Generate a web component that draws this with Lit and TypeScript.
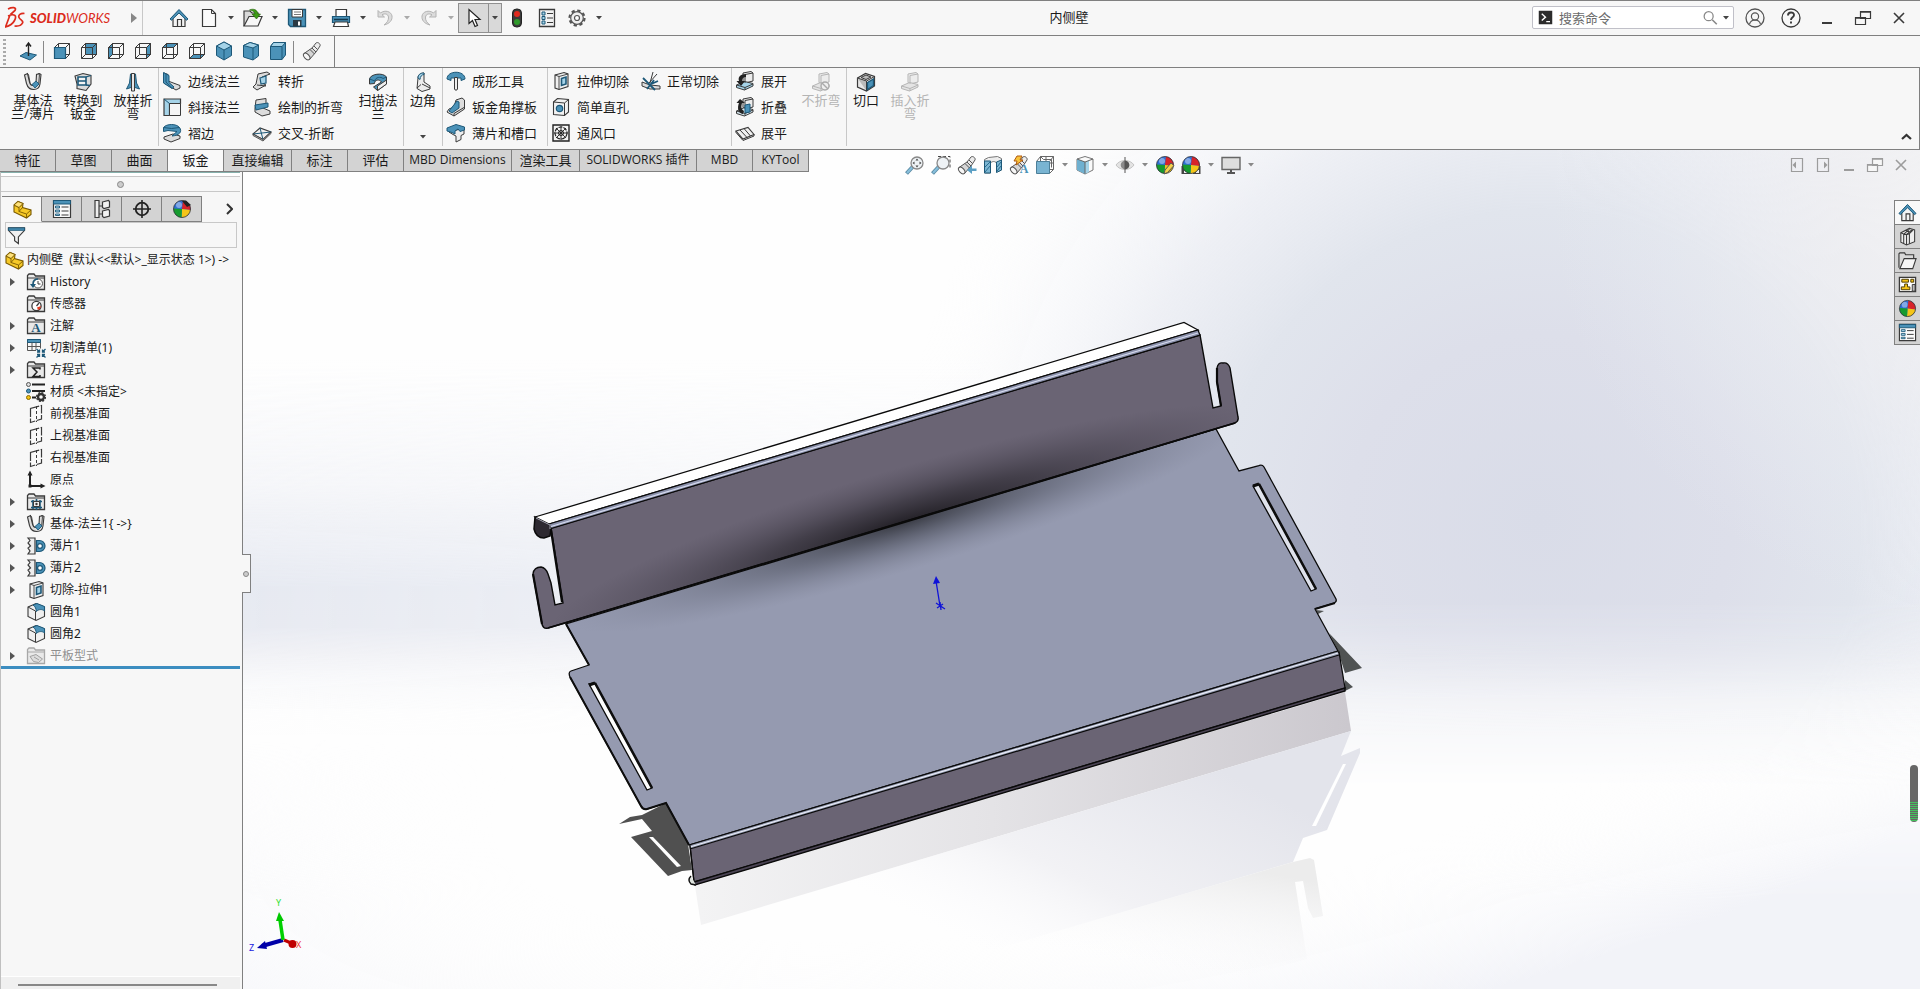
import { LitElement, html, svg, css, nothing, SVGTemplateResult, TemplateResult } from "lit";
import { customElement, state } from "lit/decorators.js";
import { classMap } from "lit/directives/class-map.js";

const INK = "#3a3a3a";
const BLUE = "#4b92b8";
const PALE = "#a5d3e8";
const DEEP = "#1d5878";
const STEEL = "#dcdcdc";
const RED = "#dc2b1c";

const wireCube = (face: SVGTemplateResult) => svg`
  <g fill="none" stroke=${INK} stroke-width="1">${face}
    <path d="M2.500 6.500h11v11h-11zM6.500 2.500h11v11h-11zM2.500 6.500l4-4M13.500 6.500l4-4M13.500 17.500l4-4M2.500 17.500l4-4"/>
  </g>`;
const folder = (inner: SVGTemplateResult | typeof nothing, line = INK) => svg`
  <path d="M1.500 17.500v-14l1.500-1.500h5l1.500 2h9v13.500z" fill="#e9e9e9" stroke=${line} stroke-width="1.300"/>
  <path d="M1.500 6h17" stroke=${line} stroke-width="1"/>${inner}`;
const plane = svg`<path d="M4.500 4.500l11-3v13.500l-11 3.500z" fill="#fafafa" stroke=${INK} stroke-width="1.200" stroke-dasharray="9 1.500"/>
  <path d="M10.500 2v16" stroke=${INK} stroke-dasharray="3 2"/>`;
const ball = svg`
  <circle cx="10" cy="10" r="8.500" fill="#2f6fd6"/>
  <path d="M10 10L11 1.500A8.500 8.500 0 0 1 18.500 11z" fill="#d8232a"/>
  <path d="M10 10l8.500 1A8.500 8.500 0 0 1 9.500 18.500z" fill="#f5c518"/>
  <path d="M10 10l-.5 8.500A8.500 8.500 0 0 1 1.500 9.500z" fill="#169b2f"/>
  <circle cx="7" cy="6" r="3" fill="#fff" opacity=".4"/>
  <circle cx="10" cy="10" r="8.500" fill="none" stroke="#333" stroke-width=".8"/>`;
const house = svg`
  <path d="M4 9v9.500h12V9l-6-6z" fill="#f4f4f4" stroke=${INK} stroke-width="1.200"/>
  <path d="M8.500 18.500v-7h4v7" fill="none" stroke=${INK} stroke-width="1.200"/>
  <path d="M1 11l9-9.500 9 9.500-1.500 1.200L10 5l-7.500 7.200z" fill=${BLUE} stroke=${DEEP} stroke-width="1"/>`;
const baseFlange = svg`
  <path d="M1.500 3l3-1.500 2 8.500c1 4 5 5 6.500 1l.5-8.500 3-1 1.500 1-1 9.500c-1 7-11 8-13.500-.5z" fill=${STEEL} stroke=${INK} stroke-width="1.100"/>
  <path d="M4.500 1.500l1 1 1.500 8M15 1.500l1.500 1-.8 9" fill="none" stroke=${INK} stroke-width=".9"/>
  <path d="M9 12.500l4-3.500 3 3-4 4z" fill=${BLUE} stroke=${DEEP} stroke-width=".9"/>`;
const part = svg`
  <path d="M2 6l4-3.500 5 2-.5 4 8.500 2.500v4.500L14.500 19 2 13z" fill="#f6c928" stroke="#7a5a00" stroke-width="1.100"/>
  <path d="M2 6l5 2.500 4-4M7 8.500v4l7.500 2.500v4M7 12.500l3.500-4M14.500 15l4.500-4" fill="none" stroke="#7a5a00" stroke-width=".9"/>
  <path d="M2 6l4-3.500 5 2-4 4z" fill="#ffe27a" stroke="#7a5a00" stroke-width=".9"/>`;
const cutBox = svg`
  <path d="M4 4l9-2.500 4 1.500v12.500l-9 3-4-1.500z" fill="#f0f0f0" stroke=${INK} stroke-width="1.100"/>
  <path d="M4 4l4 1.500v13M8 5.500l9-2.500" fill="none" stroke=${INK} stroke-width=".9"/>
  <path d="M10.500 7.500l4.500-1.500v7l-4.500 1.500z" fill=${PALE} stroke=${DEEP} stroke-width="1.600"/>`;
const props = svg`
  <path d="M1.500 1.500h17v17h-17z" fill="#fafafa" stroke=${INK} stroke-width="1.200"/>
  <path d="M1.500 1.500h17V5h-17z" fill=${BLUE} stroke=${DEEP}/>
  <path d="M3.500 7h4v2h-4zM3.500 11h4v2h-4zM3.500 15h4v1.500h-4z" fill=${PALE} stroke=${DEEP} stroke-width=".9"/>
  <path d="M9.500 8h7M9.500 12h7M9.500 16h7" stroke=${INK}/>`;
const magnifier = svg`<path d="M1.500 18.500l6-6.500" stroke="#5a8aa3" stroke-width="4"/><path d="M2 18l5.500-6" stroke="#86bedb" stroke-width="2.200"/>
  <circle cx="12" cy="8" r="6" fill="#eef2f5" stroke="#888" stroke-width="1.300"/>`;
const torch = svg`
  <path d="M2 12.500l8-5.500 4 4-6.500 7.500z" fill="#d6d6d6" stroke="#555"/>
  <path d="M10 7l4-5c1.500-1.500 5 1 4 3l-4 6z" fill="#ececec" stroke="#555"/>
  <ellipse cx="4.700" cy="15.500" rx="2.400" ry="4" transform="rotate(-42 4.700 15.500)" fill="#f7f7f7" stroke="#555"/>
  <path d="M8 8.500l4.500 4.500M12 5l3.500 3.500" stroke="#555"/>`;
const bendPlate = (c: string, line: string) => svg`
  <path d="M8 2l8-1.500 2 1.500v8l-8 2-2-1.500z" fill="#ececec" stroke=${line}/>
  <path d="M1.500 14l8-3.500 8.500 2v2.500l-8.500 4-8-2.500z" fill=${c} stroke=${line}/><path d="M1.500 14l8.500 2.500 8-3.500M10 12V3.500l8-1.500M10 16.500v2.500" fill="none" stroke=${line}/>`;
const fillet = svg`<path d="M2 5l8-3.500 8.500 3.500v9.500L10 18.500 2 14.500z" fill="#efefef" stroke=${INK} stroke-width="1.100"/>
  <path d="M2 5l7.500 4v9" fill="none" stroke=${INK}/><path d="M7 3l4-1.500 7.500 3V9c-2-2-6-2-8 .5C10 7 9.500 4.500 7 3z" fill=${BLUE} stroke=${DEEP}/>`;
const tabFeature = svg`<path d="M2 2h7v16H2l2-3-2-3 2.500-2L2 7l2-2.500z" fill="#eee" stroke=${INK} stroke-width="1.200"/>
  <path d="M10.500 4.500h3a5.200 5.200 0 0 1 0 11h-3z" fill=${BLUE} stroke=${DEEP} stroke-width="1.200"/><circle cx="14" cy="10" r="2.400" fill="#fff" stroke=${DEEP} stroke-width="1.200"/>`;

const icons: Record<string, SVGTemplateResult> = {
  home: house,
  file: svg`<path d="M3.500 1.500h9l4 4v13h-13z" fill="#fbfbfb" stroke=${INK} stroke-width="1.200"/><path d="M12.500 1.500v4h4" fill="none" stroke=${INK}/>`,
  open: svg`<path d="M1 18V3h6l2 2h6v3" fill="#d8d8d8" stroke=${INK} stroke-width="1.200"/><path d="M1 18L6 8.500h13L15 18z" fill="#f7f7f7" stroke=${INK} stroke-width="1.200"/>
    <path d="M6.500 2c4-2 8 0 8.500 4h2.500l-4 5-4.500-5H12c-.5-2.500-2.500-3.500-5.500-4z" fill="#3e9b16" stroke="#226007" stroke-width=".6"/>`,
  save: svg`<path d="M1.500 1.500h17v17h-15l-2-2z" fill=${BLUE} stroke=${DEEP} stroke-width="1.300"/><path d="M5 1.500h10.500V9H5z" fill="#fff" stroke=${INK}/><path d="M7 4h7M7 6.500h7" stroke="#777"/>
    <path d="M6 12h8.500v6.500H6z" fill="#2b3a44"/><path d="M11 13.500h2v4h-2z" fill="#fff"/>`,
  print: svg`<path d="M5 1.500h10.500V9H5z" fill="#fff" stroke=${INK} stroke-width="1.200"/><path d="M1.500 8.500h17v6h-17z" fill=${BLUE} stroke=${DEEP} stroke-width="1.200"/>
    <path d="M3 11.500h14" stroke="#15394d" stroke-width="1.600"/><path d="M4 14h12.500l1 4.500h-15z" fill="#fff" stroke=${INK} stroke-width="1.200"/>`,
  undo: svg`<path d="M3 2.500v6.500h6.500L7 6.800C10 5 13 6 13.500 9c.4 3-1.500 6-4.500 8 6-1.500 8.500-5 8-9-.7-4.500-7-6.500-11.500-3z" fill="#dcdcdc" stroke="#b4b4b4"/>`,
  redo: svg`<path d="M17 2.500v6.500h-6.500L13 6.800C10 5 7 6 6.500 9c-.4 3 1.500 6 4.500 8-6-1.500-8.500-5-8-9 .7-4.500 7-6.500 11.500-3z" fill="#dcdcdc" stroke="#b4b4b4"/>`,
  cursor: svg`<path d="M5 1.500v14l3.500-3 2.500 6 2.500-1-2.500-6H16z" fill="#fff" stroke="#222" stroke-width="1.200"/>`,
  light: svg`<rect x="5.500" y="1" width="9" height="18" rx="4" fill="#3b3b3b" stroke="#222"/><circle cx="10" cy="6" r="3" fill="#e02a1f"/><circle cx="10" cy="14" r="3" fill="#2f9a2b"/>`,
  list: svg`<path d="M2.500 1.500h15v17h-15z" fill="#f2f2f2" stroke=${INK} stroke-width="1.300"/><path d="M5 4h3v3H5zM5 8.500h3v3H5zM5 13h3v3H5z" fill=${PALE} stroke=${DEEP}/><path d="M10 5.500h6M10 10h6M10 14.500h6" stroke=${INK}/>`,
  gear: svg`<circle cx="10" cy="10" r="7.500" fill="none" stroke="#555" stroke-width="2.200" stroke-dasharray="3.300 2.590"/><circle cx="10" cy="10" r="6.300" fill="#efefef" stroke="#555" stroke-width="1.200"/><circle cx="10" cy="10" r="2.500" fill="#fff" stroke="#555" stroke-width="1.200"/>`,
  normal: svg`<path d="M2 15l6-3.500 10.500 2.500-6.500 5z" fill=${BLUE} stroke=${DEEP}/><path d="M10.500 15V3M8 5.500L10.500 2 13 5.500" fill="none" stroke="#222" stroke-width="1.400"/>`,
  cFront: svg`<path d="M6.500 2.500h11v11h-4" fill="none" stroke=${INK}/><path d="M2.500 6.500l4-4v4M13.500 6.500l4-4M13.500 17.500l4-4" fill="none" stroke=${INK}/><path d="M2.500 6.500h11v11h-11z" fill=${BLUE} stroke=${DEEP} stroke-width="1.200"/>`,
  cBack: wireCube(svg`<path d="M6.500 2.500h11v11h-11z" fill=${BLUE}/>`),
  cLeft: wireCube(svg`<path d="M2.500 6.500l4-4v11l-4 4z" fill=${BLUE}/>`),
  cRight: wireCube(svg`<path d="M13.500 6.500l4-4v11l-4 4z" fill=${BLUE}/>`),
  cTop: wireCube(svg`<path d="M2.500 6.500l4-4h11l-4 4z" fill=${BLUE}/>`),
  cBottom: wireCube(svg`<path d="M2.500 17.500l4-4h11l-4 4z" fill=${BLUE}/>`),
  iso: svg`<path d="M10 1l7.500 4v9.500L10 19l-7.500-4.500V5z" fill=${BLUE} stroke=${DEEP}/><path d="M2.500 5L10 9l7.500-4L10 1z" fill=${PALE} stroke=${DEEP}/><path d="M10 9v10" stroke=${DEEP}/>`,
  tri: svg`<path d="M9 1.500l8.500 2.500v11L12 19l-9.500-3V4.500z" fill=${BLUE} stroke=${DEEP}/><path d="M2.500 4.500L12 7l5.500-3L9 1.500z" fill=${PALE} stroke=${DEEP}/><path d="M12 7v12" stroke=${DEEP}/>`,
  di: svg`<path d="M5.500 1.500h12V14L14 18.500H2.500v-13z" fill=${BLUE} stroke=${DEEP}/><path d="M2.500 5.500H14l3.500-4h-12z" fill=${PALE} stroke=${DEEP}/><path d="M14 5.500v13" stroke=${DEEP}/>`,
  torch,
  base: baseFlange,
  convert: svg`<path d="M2 4l8-2.500 8 2V12l-5 6.500-9-2V12z" fill=${STEEL} stroke=${INK} stroke-width="1.100"/><path d="M5 5h8v8H5z" fill="#f3f3f3" stroke=${DEEP} stroke-width="1.600"/><path d="M13 5l5-1.500M13 13l4 .5M5 9h8" stroke=${DEEP} stroke-width="1.300"/>`,
  loft: svg`<path d="M7.500 2h5l1 9 3 6-4.500-1.500h-4L3.500 17l3-6z" fill=${BLUE} stroke=${DEEP}/><path d="M8.500 1.500h3V19h-3z" fill="#e6e6e6" stroke=${INK}/>`,
  edge: svg`<path d="M2 2l4 1.500V10l12 4.500v2.500l-4 2-12-7z" fill=${STEEL} stroke=${INK}/><path d="M1.500 1.500L7 4.500v7l5 4.500-2 1.500-8.500-5.500z" fill=${BLUE} stroke=${DEEP}/><path d="M4 3v8l6 6.500" fill="none" stroke=${DEEP}/>`,
  miter: svg`<path d="M2 2h16.500v4.500H7.500v12H2z" fill=${PALE} stroke=${INK} stroke-width="1.200"/><path d="M7.500 6.500h11v12h-11z" fill="#f5f5f5" stroke=${INK}/><path d="M2 2l5.500 4.500" stroke=${DEEP}/>`,
  hem: svg`<path d="M2 14l9-3 7 2v2.500L9 19l-7-3z" fill=${STEEL} stroke=${INK}/><path d="M1.500 4.500c3-4 13-4 16 0 3 4 0 8-7.500 8.500l5-4.500-9-1-4.500 1z" fill=${BLUE} stroke=${DEEP}/><path d="M1.500 4.500l8 1 8-1" fill="none" stroke=${DEEP}/>`,
  jog: svg`<path d="M6 3l9-2 3 2-8 3v6l4 2-9 5-4-3 3-3z" fill=${STEEL} stroke=${INK}/><path d="M8 7l6-2v7l-5 1z" fill=${PALE} stroke=${DEEP} stroke-width="1.200"/><path d="M5 14l9 1" stroke=${INK}/>`,
  sketchBend: svg`<path d="M4 3l10-1.500V7l-3 4 7 3v3l-8 2-7-4v-4z" fill=${STEEL} stroke=${INK}/><path d="M3 8l13-2v4L4 13z" fill=${BLUE} stroke=${DEEP}/>`,
  cross: svg`<path d="M1 11l7-6 11 4-8 7.500z" fill="#f0f0f0" stroke=${INK} stroke-width="1.100"/><path d="M1 11l18-2M8 5l3 11.500" stroke=${DEEP}/><path d="M1 11l10 5.500 8-7.500v1.500L11 18 1 12.500z" fill="#bbb" stroke=${INK} stroke-width=".8"/>`,
  swept: svg`<path d="M1.500 7c1-5 13-7 17-2v7l-9 6.500-4-3.500 8-5c-2-3-7-2.500-7 1.500L1.500 12z" fill=${BLUE} stroke=${INK}/><path d="M1.500 7L7 9c0-4 6-4.500 8-2.500L18.500 5" fill="none" stroke=${DEEP}/><path d="M9.500 14l9-6v4l-9 6.500z" fill="#eee" stroke=${INK}/>`,
  corner: svg`<path d="M5 6c0-3 2-5 6-5v9l6 4v3l-8 2.500-5-3z" fill="#ececec" stroke=${INK}/><path d="M5 6c0-3 2-5 6-5v1.500c-2 0-4 2-4 5z" fill=${PALE} stroke=${DEEP}/><path d="M8 12.500l-4 3.500M9 12l8 4" stroke=${INK}/>`,
  form: svg`<path d="M1 8c0-9 18-9 18 0l-4 1.500V7H5v2.500z" fill=${BLUE} stroke=${DEEP}/><path d="M8.500 6.500h3V18c0 1.500-3 1.500-3 0z" fill="#eee" stroke=${INK}/>`,
  gusset: svg`<path d="M10 3l6-2 2.500 2v9L8 19l-7-4 2-3 5-2z" fill=${STEEL} stroke=${INK}/><path d="M3 14l8-10 2 1v6l-7 5z" fill=${BLUE} stroke=${DEEP}/><path d="M8 19v-2.500l10-6" fill="none" stroke=${INK}/>`,
  slotTab: svg`<path d="M3 9l15-4v6l-3 1.500v4l-5 2.500v-6l-3-1.500z" fill="#eee" stroke=${INK}/><path d="M1 5l9-3.500 8.500 2.500v3L14 8.500 12 6 9 8v3L6 9.500 1 8z" fill=${BLUE} stroke=${DEEP}/>`,
  cutBox,
  hole: svg`<path d="M2.500 5l4-3.500 11 1V15l-4 3.500-11-1z" fill="#f2f2f2" stroke=${INK} stroke-width="1.100"/><path d="M2.500 5l11 1v12.500M13.500 6l4-3.500" fill="none" stroke=${INK}/><circle cx="8.500" cy="11.500" r="3.200" fill=${BLUE} stroke=${DEEP} stroke-width="1.200"/>`,
  vent: svg`<path d="M2 2h16v16H2z" fill="#f4f4f4" stroke="#222" stroke-width="1.400"/><circle cx="10" cy="10" r="6" fill="none" stroke="#222" stroke-width="1.200" stroke-dasharray="4 1"/><circle cx="10" cy="10" r="2.500" fill="none" stroke="#222"/><path d="M10 3v14M3 10h14M5 5l10 10M15 5L5 15" stroke="#222" stroke-width=".9"/>`,
  normalCut: svg`<path d="M12 1L9 12M16 3L8 12" stroke=${INK}/><path d="M1 11l8 3 10 1v3H9l-8-3z" fill=${STEEL} stroke=${INK}/><path d="M2 7l12 12M8 14l9-4M6 18l7-9" stroke=${DEEP} stroke-width="1.800"/>`,
  unfold: svg`${bendPlate(PALE, INK)}<path d="M11 3C4 3 3 7 4 10H1.500L6 15l4-5H7c0-2 1-4 4-4z" fill="#222"/>`,
  fold: svg`${bendPlate("#d5e6ee", INK)}<path d="M10 8l5-1v8l-5 1z" fill=${BLUE} stroke=${DEEP}/><path d="M8 17C3 16 2 11 4 6H1.500L5 2l5 4H7c-1 4-1 6 2 8z" fill="#222"/>`,
  flatten: svg`<path d="M1 8l12-3.500 6 7L8 16z" fill="#f1f1f1" stroke=${INK} stroke-width="1.100"/><path d="M5 7l7 7.500M9 5.500l6.500 7.500M1 8v1.500l7 8 11-4.500v-1.500" fill="none" stroke=${INK}/>`,
  noBend: svg`${bendPlate("#e4e4e4", "#b5b5b5")}<circle cx="14" cy="14" r="4" fill="#eee" stroke="#aaa" stroke-width="1.400"/><path d="M11 11l6 6" stroke="#aaa" stroke-width="1.400"/>`,
  insertBend: svg`${bendPlate("#e4e4e4", "#b5b5b5")}`,
  rip: svg`<path d="M1.500 6l8-4.500 9 3V14l-8 5-9-4z" fill="#e6e6e6" stroke=${INK} stroke-width="1.200"/><path d="M1.500 6l9 3v10M10.500 9l8-4.500M5 5.500l5-2.500 5 2-5 2.500z" fill="#bbb" stroke=${INK}/><path d="M11.500 10.500l6-3.500v6.500l-6 4z" fill=${BLUE} stroke=${DEEP} stroke-width="1.300"/>`,
  part,
  props,
  config: svg`<path d="M3 1.500h4v17H3zM7 7h3M7 15h3" fill="#eee" stroke=${INK} stroke-width="1.200"/><path d="M10.500 3l6-1.500 1 1V8l-5.500 1.500-1.500-1zM10.500 12l6-1.500 1 1V17l-5.500 1.500-1.500-1z" fill="#f2f2f2" stroke=${INK} stroke-width="1.200"/>`,
  target: svg`<circle cx="10" cy="10" r="6.300" fill="none" stroke="#222" stroke-width="1.800"/><path d="M10 1v18M1 10h18" stroke="#222" stroke-width="1.600"/>`,
  ball,
  appearance: svg`${ball}<path d="M10 2l5 6 4-2-5-4.500z" fill="#222"/>`,
  funnel: svg`<path d="M1.500 2h17v2.500L12 11.500v7l-4-3v-4L1.500 4.500z" fill="#f1f1f1" stroke=${INK} stroke-width="1.200"/><path d="M1.500 2h17v2.500h-17z" fill=${BLUE} stroke=${DEEP}/>`,
  history: folder(svg`<circle cx="12" cy="11.500" r="4.500" fill="#fff" stroke="#555"/><path d="M12 9v3h2.500" fill="none" stroke=${INK}/><path d="M4 12h6l-3 4z" fill=${DEEP}/><path d="M7 12c0-3 2-5 5-5" fill="none" stroke=${DEEP} stroke-width="1.600"/>`),
  sensor: folder(svg`<circle cx="10.500" cy="12" r="4.600" fill="#fff" stroke=${INK} stroke-width="1.300"/><path d="M10.500 12l2.500-3" stroke=${INK} stroke-width="1.300"/><path d="M11 13.500l4-1.500a4.500 4.500 0 0 1-3 4z" fill="#e33a1e"/>`),
  note: folder(svg`<text x="10" y="16" text-anchor="middle" font-family="Liberation Serif, serif" font-weight="700" font-size="13" fill=${DEEP}>A</text>`),
  cutList: svg`<path d="M1.500 1.500h13v11h-13z" fill="#f6f6f6" stroke="#555"/><path d="M1.500 1.500h13v3h-13z" fill=${BLUE} stroke=${DEEP}/><path d="M6 4.500v8M10 4.500v8M1.500 8.500h13" stroke="#555"/>
    <path d="M10 10.500h10v9H10z" fill="#f7f7f7"/><path d="M10.500 11l3 3m0-2.500V14H11M19.500 11l-3 3m0-2.500V14H19M10.500 19.500l3-3m0 2.500v-2.500H11M19.500 19.500l-3-3m0 2.500v-2.500H19" fill="none" stroke=${DEEP} stroke-width="1.300"/>`,
  sigma: folder(svg`<path d="M14 9.500V8H7l4 4-4 4.500h7V15" fill="none" stroke="#222" stroke-width="1.500"/>`),
  material: svg`<circle cx="2.500" cy="2.500" r="2" fill="#ddd" stroke="#555"/><circle cx="2.500" cy="9" r="2" fill=${BLUE} stroke=${DEEP}/><circle cx="2.500" cy="15.500" r="2" fill="#f3c212" stroke="#8a6a00"/>
    <path d="M6 2.500h13M6 9h13M6 15.500h4" stroke="#222" stroke-width="1.800"/><circle cx="15" cy="15" r="3" fill="none" stroke="#333" stroke-width="2.400"/><circle cx="15" cy="15" r="4.500" fill="none" stroke="#333" stroke-width="1.200" stroke-dasharray="2 1.530"/>`,
  plane,
  origin: svg`<path d="M4 3v13h12" fill="none" stroke="#222" stroke-width="2"/><path d="M1.500 5.500L4 .5l2.500 5zM14.500 13.500l5 2.500-5 2.500z" fill="#222"/><path d="M2.500 14.500h3v3h-3z" fill="#222"/>`,
  sheet: folder(svg`<path d="M7 8v9M10.500 7v11M14 8v9M5 9.500h11M5 15.500h11" stroke=${DEEP} stroke-width="1.600"/><path d="M7.500 9.500h6v5h-6z" fill="#eee" stroke=${INK}/><circle cx="10.500" cy="12" r="1.200" fill=${INK}/>`),
  tabFeature,
  fillet,
  flatPattern: folder(svg`<path d="M4 10.500l6-2 6.500 4.500-4 3.500-5-1z" fill="#ddd" stroke="#a0a0a0"/><path d="M8 11l5 3" stroke="#a0a0a0"/>`, "#a8a8a8"),
  zoomFit: svg`${magnifier}<path d="M12 3.500l1.500 2h-3zM12 12.500l1.500-2h-3zM7.500 8l2-1.500v3zM16.500 8l-2-1.500v3z" fill="#444"/>`,
  zoomArea: svg`<path d="M7 1.500h12v12" fill="none" stroke="#444" stroke-dasharray="3 2"/>${magnifier}`,
  prevView: svg`${torch}<path d="M19.500 13.500H15v-3l-5 4.500 5 4v-3h4.500z" fill="#5b9fc4"/>`,
  section: svg`<path d="M1.500 4.500l4-2 9-1 4 2V15l-5 2V8c-1.500-2-4-2-6 0v10h-6z" fill="#ededed" stroke="#777"/><path d="M1.500 6H7.500v12h-6zM13.500 7l5-2v10l-5 2.500z" fill="#7cb6d2" stroke=${DEEP}/><path d="M2 12l5-5M2 17l5-6M14 12l4-5M14 16l4-5" stroke="#2a6c90"/>`,
  dynView: svg`${torch}<path d="M8 1h5l-2 4h3l-7 5 1-4H5z" fill="#f8c33c" stroke="#b05a10"/><text x="15" y="18" text-anchor="middle" font-family="Liberation Serif, serif" font-weight="700" font-size="12" fill=${BLUE}>A</text>`,
  orient: svg`<path d="M5.500 6.500v-5h13v13h-4M5.500 1.500l3 3h8M16.500 4.500v8M11 1.500v5M14 8h4M1.500 6.500l4-5M14.500 6.500l4-5M14.500 18.500l4-4" fill="none" stroke="#666"/><path d="M1.500 6.500h13v12h-13z" fill="#79b4d2" stroke="#4c7f99"/>`,
  display: svg`<path d="M2 4l8-2.500L18 4v11l-8 4-8-4z" fill="#fafafa" stroke="#777"/><path d="M2 4l8 3v12l-8-4z" fill="#6fb0d0"/><path d="M10 7l4-1.500V17l-4 2z" fill=${PALE}/><path d="M2 4l8 3 8-3M10 7v12" fill="none" stroke="#666"/>`,
  eye: svg`<path d="M1 10c4-6 14-6 18 0-4 6-14 6-18 0z" fill="#e3e3e3" stroke="#c4c4c4"/><circle cx="10" cy="10" r="4.300" fill="#8a8a8a"/><path d="M10 5.700a4.300 4.300 0 0 1 0 8.600z" fill="#555"/><path d="M10 2v16" stroke="#555"/>`,
  editLook: svg`${ball}<path d="M9 19l1-4 6-7 3 2.500-6.500 7z" fill="#f6d24a" stroke="#555"/>`,
  scene: svg`<path d="M.5 11h19v8H.5z" fill="#444"/><path d="M3 15h3v3H3zM9 16h3v3H9zM15 15h3v3h-3z" fill="#eee"/>${ball}`,
  monitor: svg`<path d="M1 2.500h18v12H1z" fill="#dedede" stroke="#666" stroke-width="1.400"/><path d="M10 15v3M6 18h8" stroke="#555" stroke-width="2"/>`,
  books: svg`<path d="M3 6l9-4.500 5.500 1.500v12.500L9 19l-6-3z" fill="#efefef" stroke=${INK} stroke-width="1.100"/><path d="M3 6l3 1.500v10M6 7.500l6-5M8 3.500l3.500 1.500M9 19V8l5.500-5M12 17.500V7l4-4M6 7.500L9 8l3-1" fill="none" stroke=${INK} stroke-width="1.100"/>`,
  folderOpen: svg`<path d="M1 17.500V3l1-1h5l1 2h8.500v4" fill="#d9d9d9" stroke=${INK} stroke-width="1.200"/><path d="M2 18.500L6.500 8H19l-3.500 10.500z" fill="#f6f6f6" stroke=${INK} stroke-width="1.200"/>`,
  palette: svg`<path d="M1.500 2.500h17v15h-17z" fill="#fff" stroke=${INK} stroke-width="1.400"/><path d="M4 4.500h7v3H4zM13.500 4.500h3v3h-3zM7 9.500h3v3h2.500v3H3.500v-3H7z" fill="#f5c518" stroke="#4a3a00"/><path d="M15 10h3v7h-3z" fill="#bbb" stroke=${INK}/>`,
  prompt: svg`<path d="M1 1h18v18H1z" fill="#2c2c2c"/><path d="M5 5l5 4.500L5 14M11 15.500h5" fill="none" stroke="#fff" stroke-width="1.800"/>`,
  search: svg`<circle cx="8.500" cy="8" r="5" fill="none" stroke="#888" stroke-width="1.400"/><path d="M12.500 12l5 5" stroke="#888" stroke-width="1.800"/>`,
  user: svg`<circle cx="10" cy="10" r="9" fill="none" stroke="#555" stroke-width="1.300"/><circle cx="10" cy="8.500" r="3.600" fill="none" stroke="#555" stroke-width="1.200"/><path d="M4.500 16c1-3 3-4 5.500-4s4.500 1 5.500 4" fill="none" stroke="#555" stroke-width="1.200"/>`,
  help: svg`<circle cx="10" cy="10" r="9" fill="none" stroke=${INK} stroke-width="1.300"/><path d="M7 7.500c0-4 6-4 6-.5 0 2.500-3 2-3 5M10 13.500v2" fill="none" stroke=${INK} stroke-width="1.900"/>`,
  minimize: svg`<path d="M5 15h10" stroke="currentColor" stroke-width="2"/>`,
  restore: svg`<path d="M7.500 3.500h10v7h-10zM2.500 9.500h10v7h-10z" fill="#f7f7f7" stroke="currentColor" stroke-width="1.200"/><path d="M7 4h11M2 10h11" stroke="currentColor" stroke-width="1.600"/>`,
  close: svg`<path d="M5 5l10 10M15 5L5 15" stroke="currentColor" stroke-width="1.600"/>`,
  paneLeft: svg`<path d="M4.500 3.500h11v13h-11z" fill="none" stroke="currentColor" stroke-width="1.200"/><path d="M9 6.500L5.500 10 9 13.500z" fill="currentColor"/>`,
  paneRight: svg`<path d="M4.500 3.500h11v13h-11z" fill="none" stroke="currentColor" stroke-width="1.200"/><path d="M11 6.500l3.500 3.500-3.500 3.500z" fill="currentColor"/>`,
};

const icon = (name: string): TemplateResult =>
  html`<svg class="icon" viewBox="0 0 20 20" aria-hidden="true">${icons[name]}</svg>`;
const caret = html`<svg class="caret" viewBox="0 0 6 4" aria-hidden="true"><path d="M0 0h6L3 3.500z" fill="currentColor" /></svg>`;

type Item = { id: string; text: string; drop?: boolean };
const it = (id: string, text: string, drop = false): Item => ({ id, text, drop });

const quick: Item[] = [
  it("home", "主页"), it("file", "新建", true), it("open", "打开", true), it("save", "保存", true),
  it("print", "打印", true), it("undo", "撤消", true), it("redo", "重做", true), it("cursor", "选择", true),
  it("light", "重建模型"), it("list", "文件属性"), it("gear", "选项", true),
];
const views: Item[] = [
  it("cFront", "前视"), it("cBack", "后视"), it("cLeft", "左视"), it("cRight", "右视"), it("cTop", "上视"),
  it("cBottom", "下视"), it("iso", "等轴测"), it("tri", "上下二等角轴测"), it("di", "左右二等角轴测"),
];
const hud: Item[] = [
  it("zoomFit", "整屏显示全图"), it("zoomArea", "局部放大"), it("prevView", "上一视图"), it("section", "剖面视图"),
  it("dynView", "动态注解视图"), it("orient", "视图定向", true), it("display", "显示样式", true), it("eye", "隐藏项目", true),
  it("editLook", "编辑外观"), it("scene", "应用布景", true), it("monitor", "视图设置", true),
];
const tabs = [
  ["特征", "std"], ["草图", "std"], ["曲面", "std"], ["钣金", "std"], ["直接编辑", "mid"], ["标注", "std"], ["评估", "std"],
  ["MBD Dimensions", "long"], ["渲染工具", "mid"], ["SOLIDWORKS 插件", "xlong"], ["MBD", "std"], ["KYTool", "std"],
];
type Node = { icon: string; text: string; open?: boolean; dim?: boolean };
const n = (icon: string, text: string, open = false, dim = false): Node => ({ icon, text, open, dim });
const tree: Node[] = [
  n("history", "History", true), n("sensor", "传感器"), n("note", "注解", true), n("cutList", "切割清单(1)", true),
  n("sigma", "方程式", true), n("material", "材质 <未指定>"), n("plane", "前视基准面"), n("plane", "上视基准面"),
  n("plane", "右视基准面"), n("origin", "原点"), n("sheet", "钣金", true), n("base", "基体-法兰1{ ->}", true),
  n("tabFeature", "薄片1", true), n("tabFeature", "薄片2", true), n("cutBox", "切除-拉伸1", true),
  n("fillet", "圆角1"), n("fillet", "圆角2"), n("flatPattern", "平板型式", true, true),
];

const platePath = `M566 624L589 665 571 671Q568 672 570 677L641 806Q643 810 647 809L666 803 689 845 1338 651 1315 609 1334 603Q1337 602 1336 599L1264 467Q1262 464 1258 466L1239 471 1216 429z
  M589 684L595 683 652 788 647 790z M1253 486L1259 484 1316 589 1311 591z`;
const wallPath = `M551 528L1200 335 1213 408 1221 406 1217 382V368Q1218 362 1223 363 1228 362 1230 368L1238 417Q1239 421 1235 423L548 628Q543 629 542 624L533 574Q534 567 541 567 546 568 548 574L551 583 555 605 563 603z`;

const scene = svg`
  <defs>
    <linearGradient id="sky" x1="0" y1="0" x2="0" y2="1">
      <stop offset=".25" stop-color="#e2e5ef" stop-opacity="0"/><stop offset=".4" stop-color="#e2e5ef" stop-opacity=".35"/>
      <stop offset=".52" stop-color="#e0e4ee" stop-opacity=".9"/><stop offset=".57" stop-color="#e2e5ee" stop-opacity=".9"/>
      <stop offset=".6" stop-color="#eaebf1" stop-opacity=".8"/><stop offset=".64" stop-color="#f5f6f9" stop-opacity=".6"/><stop offset=".7" stop-color="#fefefe" stop-opacity="0"/>
    </linearGradient>
    <linearGradient id="skyRight" x1="0" y1="0" x2="1" y2="0">
      <stop offset="0" stop-color="#fff"/><stop offset=".45" stop-color="#888"/><stop offset=".7" stop-color="#666"/><stop offset="1" stop-color="#888"/>
    </linearGradient>
    <radialGradient id="blob" gradientUnits="userSpaceOnUse" cx="0" cy="0" r="1" gradientTransform="translate(1540 520) rotate(8) scale(640 620)">
      <stop offset="0" stop-color="#d9dce8"/><stop offset=".3" stop-color="#dddfea"/><stop offset=".5" stop-color="#e1e5ed"/>
      <stop offset=".68" stop-color="#ebedf3" stop-opacity=".85"/><stop offset=".85" stop-color="#f5f6f9" stop-opacity=".5"/><stop offset="1" stop-color="#fefefe" stop-opacity="0"/>
    </radialGradient>
    <radialGradient id="edgeLight" gradientUnits="userSpaceOnUse" cx="0" cy="0" r="1" gradientTransform="translate(1990 200) scale(440 420)">
      <stop offset="0" stop-color="#f3f3f4"/><stop offset=".35" stop-color="#eeeef1" stop-opacity=".8"/><stop offset="1" stop-color="#e8ebf3" stop-opacity="0"/>
    </radialGradient>
    <linearGradient id="blobFade" x1="0" y1="0" x2="0" y2="1">
      <stop offset="0" stop-color="#fff"/><stop offset=".54" stop-color="#fff"/><stop offset=".6" stop-color="#aaa"/>
      <stop offset=".66" stop-color="#4a4a4a"/><stop offset=".76" stop-color="#000"/>
    </linearGradient>
    <mask id="above" maskUnits="userSpaceOnUse" x="0" y="150" width="1920" height="839"><rect x="0" y="150" width="1920" height="839" fill="url(#blobFade)"/></mask>
    <mask id="sides" maskUnits="userSpaceOnUse" x="0" y="150" width="1920" height="839"><rect x="0" y="150" width="1920" height="839" fill="url(#skyRight)"/></mask>
    <radialGradient id="floor" gradientUnits="userSpaceOnUse" cx="0" cy="0" r="1" gradientTransform="translate(1080 740) rotate(-9) scale(1080 330)">
      <stop offset="0" stop-color="#fff" stop-opacity="0"/><stop offset=".55" stop-color="#fefefe" stop-opacity="0"/><stop offset="1" stop-color="#f2f3f8"/>
    </radialGradient>
    <linearGradient id="floorMask" gradientUnits="userSpaceOnUse" x1="0" y1="740" x2="0" y2="900"><stop offset="0" stop-color="#000"/><stop offset="1" stop-color="#fff"/></linearGradient>
    <mask id="below" maskUnits="userSpaceOnUse" x="0" y="700" width="1920" height="289"><rect x="0" y="700" width="1920" height="289" fill="url(#floorMask)"/></mask>
    <radialGradient id="creaseUp"><stop offset="0" stop-color="#141216" stop-opacity=".85"/><stop offset=".4" stop-color="#1c1a20" stop-opacity=".5"/><stop offset="1" stop-color="#403b48" stop-opacity="0"/></radialGradient>
    <radialGradient id="creaseDown"><stop offset="0" stop-color="#1c1d22" stop-opacity=".75"/><stop offset=".45" stop-color="#3a3d48" stop-opacity=".4"/><stop offset="1" stop-color="#6a6e80" stop-opacity="0"/></radialGradient>
    <clipPath id="plateClip"><path d=${platePath} clip-rule="evenodd"/></clipPath>
    <clipPath id="wallClip"><path d=${wallPath}/></clipPath>
    <linearGradient id="mirrorA" gradientUnits="userSpaceOnUse" x1="700" y1="0" x2="1350" y2="0">
      <stop offset="0" stop-color="#f3f3f4"/><stop offset=".45" stop-color="#e4e3e6"/><stop offset="1" stop-color="#cbc8ce"/></linearGradient>
    <linearGradient id="mirrorB" gradientUnits="userSpaceOnUse" x1="1000" y1="960" x2="1120" y2="720">
      <stop offset="0" stop-color="#fbfbfd" stop-opacity="0"/><stop offset=".4" stop-color="#f2f2f5"/><stop offset="1" stop-color="#e3e4eb"/></linearGradient>
    <linearGradient id="mirrorC" gradientUnits="userSpaceOnUse" x1="1250" y1="870" x2="1230" y2="980">
      <stop offset="0" stop-color="#ececec"/><stop offset="1" stop-color="#f9f9fb" stop-opacity="0"/></linearGradient>
  </defs>
  <rect x="0" y="150" width="1920" height="839" fill="#fefefe"/>
  <rect x="0" y="150" width="1920" height="839" fill="url(#sky)" mask="url(#sides)"/>
  <g mask="url(#above)"><rect x="0" y="150" width="1920" height="839" fill="url(#blob)"/><rect x="1400" y="150" width="520" height="520" fill="url(#edgeLight)"/></g>
  <rect x="0" y="700" width="1920" height="289" fill="url(#floor)" mask="url(#below)"/>

  <path d="M695 886L1345 692 1351 731 701 925z" fill="url(#mirrorA)"/>
  <path d="M701 925L1351 731 1341 756 1360 748V753L1327 830 1303 838 1293 862 860 989H690z" fill="url(#mirrorB)"/>
  <path d="M1343 764h3L1316 826h-4z" fill="#fff"/>
  <path d="M860 989L1293 862 1310 858 1314 860 1323 916 1313 918 1308 908 1303 881 1295 882 1307 959 1200 989z" fill="url(#mirrorC)"/>

  <path d="M619 824L630 817 642 815 666 803 688 844 692 870 682 871 668 876 631 837 652 831 642 819zM649 837L677 867 681 866 653 837z" fill="#505050" fill-rule="evenodd"/>
  <path d="M1329 633L1362 668 1345 673 1338 651zM1345 680L1353 687 1345 691zM1316 610l8 1-6 3z" fill="#505353"/>

  <path d=${platePath} fill="#959ab0" fill-rule="evenodd"/>
  <g clip-path="url(#plateClip)"><ellipse cx="905" cy="522" rx="350" ry="48" transform="rotate(-16.700 905 522)" fill="url(#creaseDown)"/></g>
  <path d=${platePath} fill="none" stroke="#0a0a0a" stroke-width="1.300"/>
  <path d="M595 683l57 105M1259 484l57 105" stroke="#0d0d0d" stroke-width="2.600" fill="none"/>
  <path d="M589 685l6-2M1253 486l6-2" stroke="#0d0d0d" stroke-width="3" fill="none"/>
  <path d="M566 624l23 41M570 677l71 129q2 4 6 3l19-6 23 42M1315 609l20-6" stroke="#0d0d0d" stroke-width="2" fill="none"/>

  <path d="M690 846L1339 652 1345 688 694 882z" fill="#6a6474" stroke="#0a0a0a" stroke-width="1.300"/>
  <path d="M694 882L1345 688V691L695 885z" fill="#4b4454" stroke="#0a0a0a" stroke-width="1.400"/>
  <path d="M690 847L1338 653" stroke="#8e95ab" stroke-width="4"/><path d="M690 847L1338 653" stroke="#e8ebf6" stroke-width="1.300"/>
  <path d="M689 845L1338 651M690 849L1339 655M690 845l4 37" stroke="#0a0a0a" stroke-width="1.200" fill="none"/>
  <path d="M691 876q-4 4 0 8l5 1" fill="#dfe4df" stroke="#111" stroke-width="1.400"/>

  <path d=${wallPath} fill="#6a6474"/>
  <g clip-path="url(#wallClip)"><ellipse cx="905" cy="524" rx="370" ry="56" transform="rotate(-16.700 905 524)" fill="url(#creaseUp)"/></g>
  <path d=${wallPath} fill="none" stroke="#0a0a0a" stroke-width="1.400"/>
  <path d="M548 628L1235 423" stroke="#0a0a0a" stroke-width="1.800"/>
  <path d="M551 530l11 72M1217 368v14l4 24M533 574l9 50" stroke="#0a0a0a" stroke-width="2.200" fill="none"/>
  <path d="M535 517L534 529Q536 538 544 538L550 536 551 528 549 524z" fill="#2d2931" stroke="#0a0a0a" stroke-width="1.500"/>
  <path d="M535 517L1184 322.500 1198 330 549 524z" fill="#fff" stroke="#0a0a0a" stroke-width="1.300"/>
  <path d="M549 524L1198 330 1200 335 551 528.500z" fill="#8a90aa" stroke="#0a0a0a" stroke-width="1.200"/>
  <path d="M551 526.500L1198 333" stroke="#d5daee" stroke-width="1.200"/>
  <path d="M536 518l14 7v4" stroke="#aab" stroke-width="1" fill="none"/>

  <g stroke="#0f12d8" fill="#0f12d8"><path d="M940 606l-4-25M936 603l9 6M940 602l1 8M937 608l6-4" stroke-width="1.300"/><path d="M933 584l3-8 4 7z" stroke="none"/></g>

  <g font-family="Noto Sans, sans-serif" font-size="9">
    <path d="M283 940L262 946" stroke="#0000a8" stroke-width="4"/><path d="M257 948l8-7 2 8z" fill="#0000a8"/>
    <path d="M284 940l7 3" stroke="#c00000" stroke-width="3"/><circle cx="292.500" cy="944" r="4" fill="#c00000"/>
    <path d="M283 940l-3-20" stroke="#00d000" stroke-width="3.500"/><path d="M276 921l3-9 5 9z" fill="#00c800"/>
    <text x="276" y="906" fill="#2ee02e">Y</text><text x="249" y="951" fill="#2020e0">Z</text><text x="296" y="948" fill="#f03030">X</text>
  </g>`;

@customElement("app-root")
export class AppRoot extends LitElement {
  @state() private tab = "钣金";
  @state() private panel = "part";

  static styles = css`
    :host { display: flex; flex-direction: column; height: 100vh; overflow: hidden; background: #f7f7f7; color: #1a1a1a;
      font: 12px/16px "Noto Sans", "Noto Sans CJK SC", sans-serif; }
    *, *::before { box-sizing: border-box; }
    button, input { font: inherit; color: inherit; background: none; border: 0; padding: 0; margin: 0; }
    button { display: flex; align-items: center; justify-content: center; cursor: default; white-space: nowrap; }
    input:focus { outline: none; }
    .icon { width: 20px; height: 20px; flex: none; display: block; }
    .caret { width: 6px; height: 4px; display: block; color: #444; }
    .drop { width: 14px; height: 100%; }

    .titlebar { display: flex; align-items: stretch; height: 36px; border-top: 1px solid #808080; border-bottom: 1px solid #808080; flex: none; }
    .brand { display: flex; align-items: center; width: 143px; padding-left: 5px; border-right: 1px solid #c8c8c8; margin-right: 21px; }
    .mark { width: 21px; height: 26px; margin-right: 4px; }
    .word { flex: 1; color: #dc2b1c; font: italic 13px/16px "Lato", "Open Sans", sans-serif; }
    .word b { font-weight: 900; }
    .expand { width: 16px; }
    .pair { display: flex; align-items: center; }
    .pair.active { background: #d9d9d9; border: 1px solid #909090; margin: 2px 0; }
    .pair.active .tool { width: 30px; border-right: 1px solid #909090; }
    .pair.active .drop { width: 12px; }
    .tool { width: 30px; height: 100%; }
    .faded .caret { color: #aaa; }
    .caption { flex: 1; margin: 0; font-size: 13px; font-weight: 400; line-height: 32px; text-align: center; }
    .search { display: flex; align-items: center; width: 202px; height: 23px; margin: 5px 3px 0 0; padding: 0 3px 0 5px; background: #fff; border: 1px solid #c0c0c8; border-radius: 2px; }
    .search .icon { width: 15px; height: 15px; }
    .search .lens .icon { width: 18px; height: 18px; }
    .search input { flex: 1; min-width: 0; padding-left: 6px; font-size: 13px; line-height: 18px; }
    .search input::placeholder { color: #6c6c6c; opacity: 1; }
    .search .lens { margin-right: 3px; }
    .search .drop { width: 8px; }
    .winbtn { width: 36px; color: #3a3a3a; }
    .sysbtns { display: flex; padding-right: 3px; }

    .viewbar { display: flex; height: 32px; border-bottom: 1px solid #808080; flex: none; }
    .viewset { display: flex; align-items: center; width: 335px; height: 31px; border-right: 1px solid #808080; }
    .grip { width: 3px; height: 26px; margin: 0 8px 0 3px; background: repeating-linear-gradient(#aaa 0 2px, transparent 2px 4px); }
    .viewset button { width: 27px; height: 29px; align-self: flex-start; }
    .rule { width: 1px; height: 22px; background: #888; margin: 0 4px 0 2px; }

    .ribbon { display: flex; height: 82px; border-bottom: 1px solid #808080; border-right: 1px solid #808080; flex: none; font-size: 13px; }
    .group { display: flex; border-right: 1px solid #c8c8c8; margin: 0 0 3px; padding-left: 3px; }
    .group.first { padding-left: 8px; }
    .group.tight { padding-left: 0; }
    .group.last { border: 0; }
    .big { flex-direction: column; justify-content: flex-start; width: 50px; padding-top: 4px; line-height: 13px; gap: 2px; white-space: pre-line; text-align: center; }
    .big .caret { margin-top: auto; margin-bottom: 7px; }
    .big.slim { width: 38px; }
    .big:disabled { color: #b4b4b4; }
    .col { display: flex; flex-direction: column; }
    .col button { height: 26px; gap: 6px; justify-content: flex-start; }
    .w60 { width: 61px; } .w90 { width: 90px; } .w100 { width: 101px; }
    .collapse { width: 26px; margin: auto 0 4px auto; height: 18px; }
    .collapse svg { width: 11px; height: 7px; }

    .stage { display: grid; grid-template-columns: 243px 1fr; grid-template-rows: auto 1fr; flex: 1; min-height: 0; }
    .model { grid-area: 1 / 1 / -1 / -1; width: 100%; height: 100%; min-height: 0; display: block; contain: size; }
    .tabs { grid-area: 1 / 1 / 2 / -1; justify-self: start; z-index: 2; display: flex; height: 22px; border-bottom: 1px solid #808080; background: #808080; }
    .tabs button { background: #d3d3d3; border-right: 1px solid #808080; font-size: 13px; padding-bottom: 1px; }
    .tabs .latin { font-family: "Open Sans", "Noto Sans CJK SC", sans-serif; font-size: 12px; }
    .tabs .on { background: #f9f9f9; }
    .std { width: 56px; } .mid { width: 68px; } .long { width: 108px; } .xlong { width: 117px; }

    .side { grid-area: 2 / 1; position: relative; display: flex; flex-direction: column; min-height: 0; background: #f7f7f7; border-left: 1px solid #c0c0c0; border-right: 1px solid #808080; }
    .lip { height: 5px; margin-right: 2px; background: #fff; border-top: 1px solid #86b0ac; border-bottom: 1px solid #c8c8c8; }
    .knob { width: 7px; height: 7px; border-radius: 50%; background: #ccc; border: 1px solid #888; }
    .bar { display: flex; justify-content: center; align-items: center; height: 15px; margin-right: 2px; border-bottom: 1px solid #c8c8c8; }
    .ptabs { display: flex; height: 26px; margin: 4px 2px 0 1px; }
    .ptabs .pt { width: 40px; background: #d3d3d3; border: 1px solid #808080; border-left: 0; }
    .ptabs .pt.on { background: #f7f7f7; border-bottom-color: #f7f7f7; }
    .ptabs .more { margin-left: auto; width: 22px; }
    .more svg { width: 7px; height: 12px; }
    .filter { display: flex; align-items: center; height: 26px; margin: 0 5px 0 4px; padding-left: 1px; border: 1px solid #c8c8c8; }
    .filter .icon { width: 19px; height: 19px; }
    .filter input { flex: 1; min-width: 0; }
    .root { display: flex; align-items: center; gap: 3px; height: 22px; margin: 1px 2px 0 0; padding-left: 3px; overflow: hidden; white-space: pre; }
    ul { list-style: none; margin: 0 2px 0 0; padding: 0; border-bottom: 3px solid #3c8dc0; }
    li { display: flex; align-items: center; height: 22px; padding-left: 5px; white-space: pre; }
    li:last-child { height: 21px; }
    li .toggle { width: 12px; height: 22px; margin-right: 8px; }
    li .toggle svg { width: 5px; height: 8px; }
    li .icon { margin-right: 4px; }
    .dim { color: #8f8f8f; }
    .hscroll { margin: auto 2px 0 0; height: 13px; border-top: 1px solid #fff; background: #f0f0f0; display: flex; align-items: center; }
    .thumb { width: 199px; height: 2px; margin: 3px 0 0 17px; background: #888; }
    .handle { position: absolute; right: -9px; top: 382px; width: 9px; height: 39px; background: #f7f7f7; border: 1px solid #808080; border-left: 0; }
    .handle .knob { width: 6px; height: 6px; }

    .over { grid-area: 1 / 2 / -1 / 3; z-index: 1; display: flex; flex-direction: column; min-height: 0; }
    .hudrow { display: grid; grid-template-columns: 1fr auto 1fr; height: 30px; padding-right: 3px; }
    .hud { grid-column: 2; display: flex; }
    .hud .tool, .docbtns button { width: 26px; }
    .hud .caret { color: #888; }
    .docbtns { display: flex; justify-content: flex-end; padding-right: 3px; color: #9c9c9c; }
    .tasks { align-self: flex-end; margin-top: 20px; border: 1px solid #808080; border-right: 0; border-bottom: 0; }
    .tasks button { width: 25px; height: 24px; background: #d3d3d3; border-bottom: 1px solid #808080; }
    .tasks button:first-child { background: #f9f9f9; }
    .tasks .icon { width: 19px; height: 19px; margin-right: 1px; }
    .meter { align-self: flex-end; margin: auto 2px 167px 0; width: 8px; height: 57px; border-radius: 4px; background: linear-gradient(#666 36px, transparent 36px), repeating-linear-gradient(#666 0 1px, #45c05e 1px 2px); }
  `;

  private tool(i: Item) {
    const cls = { pair: true, active: i.id === "cursor", faded: i.id === "undo" || i.id === "redo" };
    return html`<div class=${classMap(cls)}>
      <button class="tool" aria-label=${i.text}>${icon(i.id)}</button>
      ${i.drop ? html`<button class="drop" aria-label=${i.text + "菜单"}>${caret}</button>` : nothing}
    </div>`;
  }
  private small(id: string, text: string) {
    return html`<button>${icon(id)}${text}</button>`;
  }
  private big(id: string, text: string, cls = "", off = false, drop = false) {
    return html`<button class="big ${cls}" ?disabled=${off}>${icon(id)}<span>${text}</span>${drop ? caret : nothing}</button>`;
  }

  render() {
    return html`
      <header class="titlebar">
        <div class="brand">
          <svg class="mark" viewBox="0 0 21 26" fill="none" stroke=${RED} stroke-width="1.700" aria-hidden="true">
            <path d="M3 4c4-2 9-2 7 1.500L5.500 9.500M3 11c7-3 9 0 6.500 4.500-1.500 3-5 5.500-9 6.500L5 10M19.500 8.500c-4-.5-6.500 1.500-5.500 4 1 2.500 5 3 3.500 5.500-1 2.300-4 3.300-8 3" />
          </svg>
          <span class="word"><b>SOLID</b>WORKS</span>
          <button class="expand" aria-label="展开菜单"><svg width="6" height="10" viewBox="0 0 6 10"><path d="M0 0l6 5-6 5z" fill="#888" /></svg></button>
        </div>
        ${quick.map((i) => this.tool(i))}
        <h1 class="caption">内侧壁</h1>
        <div class="search">
          ${icon("prompt")}
          <input type="text" aria-label="搜索命令" placeholder="搜索命令" />
          <button class="lens" aria-label="搜索">${icon("search")}</button>
          <button class="drop" aria-label="搜索选项">${caret}</button>
        </div>
        <div class="sysbtns">
          ${[["user", "登录"], ["help", "帮助"], ["minimize", "最小化"], ["restore", "还原"], ["close", "关闭"]].map(
            ([id, t]) => html`<button class="winbtn" aria-label=${t}>${icon(id)}</button>`)}
        </div>
      </header>

      <div class="viewbar" role="toolbar" aria-label="标准视图">
        <div class="viewset">
          <span class="grip"></span>
          <button aria-label="正视于">${icon("normal")}</button>
          <span class="rule"></span>
          ${views.map((v) => html`<button aria-label=${v.text}>${icon(v.id)}</button>`)}
          <span class="rule"></span>
          <button aria-label="视图选择器">${icon("torch")}</button>
        </div>
      </div>

      <div class="ribbon">
        <div class="group first">
          ${this.big("base", "基体法\n兰/薄片")}${this.big("convert", "转换到\n钣金")}${this.big("loft", "放样折\n弯")}
        </div>
        <div class="group">
          <div class="col w90">${this.small("edge", "边线法兰")}${this.small("miter", "斜接法兰")}${this.small("hem", "褶边")}</div>
          <div class="col w100">${this.small("jog", "转折")}${this.small("sketchBend", "绘制的折弯")}${this.small("cross", "交叉-折断")}</div>
          ${this.big("swept", "扫描法\n兰")}
        </div>
        <div class="group tight">${this.big("corner", "边角", "slim", false, true)}</div>
        <div class="group">
          <div class="col w100">${this.small("form", "成形工具")}${this.small("gusset", "钣金角撑板")}${this.small("slotTab", "薄片和槽口")}</div>
        </div>
        <div class="group">
          <div class="col w90">${this.small("cutBox", "拉伸切除")}${this.small("hole", "简单直孔")}${this.small("vent", "通风口")}</div>
          <div class="col w90">${this.small("normalCut", "正常切除")}</div>
        </div>
        <div class="group">
          <div class="col w60">${this.small("unfold", "展开")}${this.small("fold", "折叠")}${this.small("flatten", "展平")}</div>
          ${this.big("noBend", "不折弯", "", true)}
        </div>
        <div class="group tight last">${this.big("rip", "切口", "slim")}${this.big("insertBend", "插入折\n弯", "", true)}</div>
        <button class="collapse" aria-label="折叠功能区"><svg viewBox="0 0 11 7"><path d="M1 6l4.500-4L10 6" fill="none" stroke="#333" stroke-width="2.200" /></svg></button>
      </div>

      <div class="stage">
        <svg class="model" viewBox="0 150 1920 839" preserveAspectRatio="xMidYMid slice" role="img" aria-label="内侧壁">${scene}</svg>
        <nav class="tabs" role="tablist">
          ${tabs.map(([t, w]) => html`<button role="tab" aria-selected=${this.tab === t}
            class=${classMap({ [w]: true, on: this.tab === t, latin: /^[A-Z]/.test(t) })} @click=${() => (this.tab = t)}>${t}</button>`)}
        </nav>

        <aside class="side">
          <div class="lip"></div>
          <div class="bar"><span class="knob"></span></div>
          <div class="ptabs">
            ${[["part", "设计树"], ["props", "属性"], ["config", "配置"], ["target", "尺寸专家"], ["appearance", "外观"]].map(
              ([id, t]) => html`<button class=${classMap({ pt: true, on: this.panel === id })} aria-label=${t} @click=${() => (this.panel = id)}>${icon(id)}</button>`)}
            <button class="more" aria-label="更多"><svg viewBox="0 0 7 12"><path d="M1 1l5 5-5 5" fill="none" stroke="#333" stroke-width="2" /></svg></button>
          </div>
          <label class="filter">${icon("funnel")}<input type="text" aria-label="过滤" /></label>
          <div class="root">${icon("part")}<span>内侧壁  (默认&lt;&lt;默认&gt;_显示状态 1&gt;) -&gt;</span></div>
          <ul role="tree">
            ${tree.map((d) => html`<li role="treeitem" class=${classMap({ dim: !!d.dim })}>
              ${d.open
                ? html`<button class="toggle" aria-label="展开"><svg viewBox="0 0 5 8"><path d="M0 0l5 4-5 4z" fill="#555" /></svg></button>`
                : html`<span class="toggle"></span>`}
              ${icon(d.icon)}<span>${d.text}</span></li>`)}
          </ul>
          <div class="hscroll"><div class="thumb"></div></div>
          <button class="handle" aria-label="折叠面板"><span class="knob"></span></button>
        </aside>

        <div class="over">
          <div class="hudrow">
            <div class="hud" role="toolbar" aria-label="视图">${hud.map((i) => this.tool(i))}</div>
            <div class="docbtns">
              ${[["paneLeft", "左窗格"], ["paneRight", "右窗格"], ["minimize", "最小化"], ["restore", "还原"], ["close", "关闭"]].map(
                ([id, t]) => html`<button aria-label=${t}>${icon(id)}</button>`)}
            </div>
          </div>
          <div class="tasks">
            ${[["home", "资源"], ["books", "设计库"], ["folderOpen", "文件探索器"], ["palette", "视图调色板"], ["ball", "外观、布景"], ["props", "自定义属性"]].map(
              ([id, t]) => html`<button aria-label=${t}>${icon(id)}</button>`)}
          </div>
          <div class="meter"></div>
        </div>
      </div>
    `;
  }
}
